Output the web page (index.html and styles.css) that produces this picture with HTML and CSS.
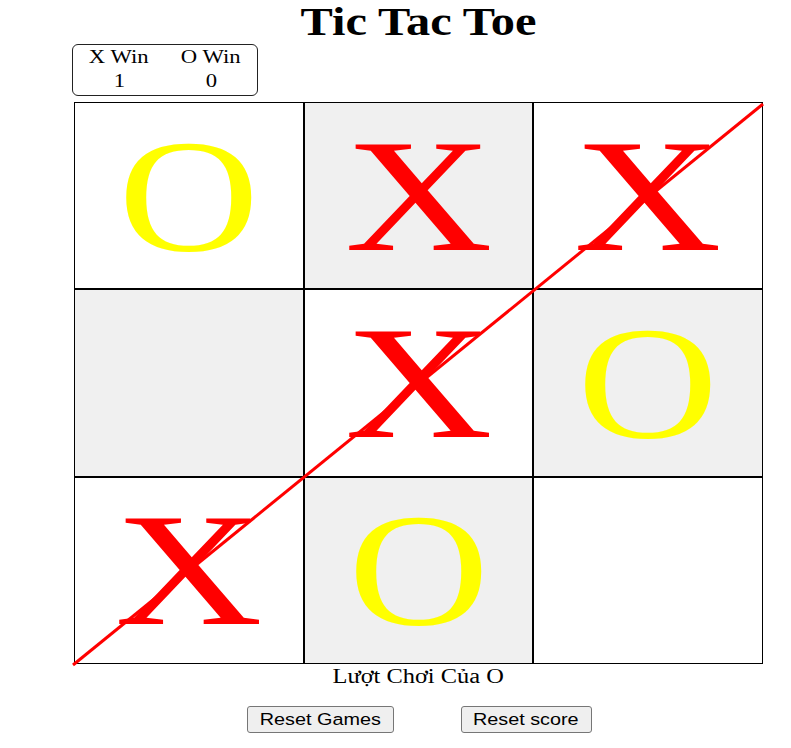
FILE: index.html
```html
<!DOCTYPE html>
<html lang="vi">
<head>
<meta charset="utf-8">
<title>Tic Tac Toe</title>
<link rel="stylesheet" href="styles.css">
</head>
<body>
<div class="app">
  <h1 class="title"><span class="stretch-title">Tic Tac Toe</span></h1>
  <div class="score">
    <span class="score-cell"><span class="stretch-score">X Win</span></span>
    <span class="score-cell"><span class="stretch-score">O Win</span></span>
    <span class="score-cell"><span class="stretch-score">1</span></span>
    <span class="score-cell"><span class="stretch-score">0</span></span>
  </div>
  <div class="board">
    <div class="cell"><span class="mark mark-o">O</span></div>
    <div class="cell cell-alt"><span class="mark mark-x">X</span></div>
    <div class="cell"><span class="mark mark-x">X</span></div>
    <div class="cell cell-alt"></div>
    <div class="cell"><span class="mark mark-x">X</span></div>
    <div class="cell cell-alt"><span class="mark mark-o">O</span></div>
    <div class="cell"><span class="mark mark-x">X</span></div>
    <div class="cell cell-alt"><span class="mark mark-o">O</span></div>
    <div class="cell"></div>
    <svg class="win-line" viewBox="0 0 689 562" preserveAspectRatio="none">
      <line x1="-1" y1="563" x2="689" y2="2" stroke="#ff0000" stroke-width="3"/>
    </svg>
  </div>
  <p class="status"><span class="stretch-status">Lượt Chơi Của O</span></p>
  <div class="actions">
    <button class="btn btn-games"><span class="stretch-btn">Reset Games</span></button>
    <button class="btn btn-score"><span class="stretch-btn">Reset score</span></button>
  </div>
</div>
</body>
</html>
```

FILE: styles.css
```css
html, body {
  margin: 0;
  padding: 0;
  background: #ffffff;
}

body {
  font-family: "Liberation Serif", "Times New Roman", serif;
  color: #000000;
}

.app {
  width: 689px;
  margin-left: 74px;
}

.title {
  margin: 0;
  padding-top: 2px;
  font-size: 40px;
  line-height: 40px;
  font-weight: bold;
  text-align: center;
}

.stretch-title {
  display: inline-block;
  transform: scaleX(1.21);
}

.score {
  margin: 2px 0 0 -2px;
  width: 186px;
  height: 52px;
  box-sizing: border-box;
  border: 1px solid #222222;
  border-radius: 6px;
  display: grid;
  grid-template-columns: 1fr 1fr;
  grid-auto-rows: 24px;
  font-size: 18px;
  line-height: 24px;
}

.score-cell {
  text-align: center;
}

.stretch-score {
  display: inline-block;
  transform: scaleX(1.26);
}

.board {
  position: relative;
  margin-top: 6px;
  width: 689px;
  height: 562px;
  display: grid;
  grid-template-columns: repeat(3, 1fr);
  grid-template-rows: repeat(3, 1fr);
}

.cell {
  box-sizing: border-box;
  border: 1px solid #000000;
  background: #ffffff;
  display: flex;
  align-items: center;
  justify-content: center;
  overflow: hidden;
}

.cell-alt {
  background: #f0f0f0;
}

.mark {
  display: inline-block;
  font-size: 160px;
  line-height: 1;
}

.mark-x {
  color: #ff0000;
  transform: scaleX(1.28);
}

.mark-o {
  color: #ffff00;
  transform: scaleX(1.22);
}

.win-line {
  position: absolute;
  left: 0;
  top: 0;
  width: 689px;
  height: 562px;
  overflow: visible;
  pointer-events: none;
}

.status {
  margin: 1px 0 0;
  font-size: 20px;
  line-height: 23px;
  text-align: center;
}

.stretch-status {
  display: inline-block;
  transform: scaleX(1.22);
}

.actions {
  margin-top: 18px;
  display: flex;
  justify-content: center;
  gap: 67px;
  padding-left: 1px;
}

.btn {
  box-sizing: border-box;
  height: 27px;
  padding: 0;
  margin: 0;
  background: #efefef;
  border: 1px solid #767676;
  border-radius: 3px;
  font-family: "Liberation Sans", Arial, sans-serif;
  font-size: 16.8px;
  line-height: 25px;
  color: #000000;
  text-align: center;
}

.btn-games {
  width: 147px;
}

.btn-score {
  width: 131px;
}

.stretch-btn {
  display: inline-block;
  transform: scaleX(1.18);
}
```
